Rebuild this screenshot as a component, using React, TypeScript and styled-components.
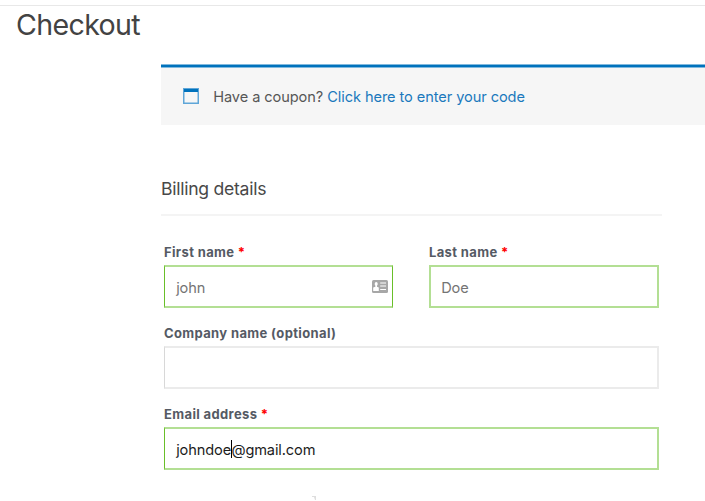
import React from "react";
import styled, { createGlobalStyle } from "styled-components";

const GlobalStyle = createGlobalStyle`
  * { box-sizing: border-box; }
  html, body { margin: 0; background: #fff; overflow: hidden; }
  body { font-family: Inter, "Liberation Sans", sans-serif; color: #565656; }
`;

const Page = styled.main`
  width: 705px;
  height: 501px;
  padding-top: 5px;
  overflow: hidden;
`;

const Title = styled.h1`
  margin: 0;
  height: 59px;
  border-top: 1px solid #e8e8e8;
  padding-left: 16px;
  font-size: 28.6px;
  line-height: 38px;
  font-weight: 400;
  letter-spacing: -0.65px;
  color: #434343;
`;

const Content = styled.section`
  margin-left: 161px;
`;

const Notice = styled.div`
  height: 61px;
  display: flex;
  align-items: center;
  gap: 14.2px;
  padding: 4px 0 0 22px;
  background: linear-gradient(#80b9de 0 1px, #0072bc 1px 3px, #80b9de 3px 4px, #f6f6f6 4px);
  font-size: 14.6px;
  line-height: 20px;
  white-space: pre;
`;

const WindowIcon = styled.svg`
  margin-top: -1px;
`;

const NoticeText = styled.span`
  letter-spacing: -0.08px;
`;

const CouponLink = styled.a`
  color: #1b79bd;
`;

const Heading = styled.h2`
  margin: 51px 0 0;
  width: 501px;
  height: 40px;
  border-bottom: 2px solid #f4f4f4;
  font-size: 17.6px;
  line-height: 25px;
  font-weight: 400;
  letter-spacing: -0.27px;
  color: #484848;
`;

const Form = styled.form`
  display: grid;
  grid-template-columns: 229px 230px;
  column-gap: 36px;
  row-gap: 15px;
  width: 495px;
  margin: 27px 0 0 3px;
`;

const Field = styled.div<{ $wide?: boolean }>`
  grid-column: ${(p) => (p.$wide ? "1 / -1" : "auto")};
  height: 66px;
`;

const Label = styled.label`
  display: block;
  height: 22px;
  font-size: 13px;
  line-height: 19px;
  font-weight: 700;
  letter-spacing: 0.36px;
  color: #555a64;
`;

const Required = styled.span`
  color: #f00;
`;

const Control = styled.div<{ $valid?: boolean; $left?: number; $right?: number; $active?: boolean }>`
  height: 43px;
  display: flex;
  align-items: center;
  padding: 2px 4px 0 ${(p) => 12.2 - (p.$left ?? 1)}px;
  border-style: solid;
  border-width: 2px ${(p) => p.$right ?? 2}px 2px ${(p) => p.$left ?? 1}px;
  border-color: ${(p) => (p.$valid ? "#b3df94" : "#ebebeb")};
  ${(p) => (p.$left ?? 1) === 1 && `border-left-color: ${p.$valid ? "#69bf29" : "#d8d8d8"};`}
  ${(p) => p.$right === 1 && "border-right-color: #69bf29;"}
  font-size: 14.6px;
  line-height: 20px;
  letter-spacing: -0.13px;
  color: ${(p) => (p.$active ? "#1c1c1c" : "#747474")};
`;

const Caret = styled.span`
  width: 1px;
  height: 18px;
  background: #000;
  margin-right: -0.6px;
  margin-top: -1px;
`;

const CardIcon = styled.svg`
  margin-left: auto;
  margin-top: -2px;
`;

const NextLabelEdge = styled.svg`
  display: block;
  margin: 25px 0 0 151px;
`;

const Star = () => <Required> *</Required>;

export default function App() {
  return (
    <>
      <GlobalStyle />
      <Page>
        <Title>Checkout</Title>
        <Content>
          <Notice>
            <WindowIcon width="16" height="16" viewBox="0 0 16 16">
              <path fill="#5fa6d8" fillRule="evenodd" d="M0 0h16v16H0zM1.5 4v10.5h13V4z" />
              <path fill="#0072bc" d="M1 1h14v3H1z" />
            </WindowIcon>
            <NoticeText>
              Have a coupon? <CouponLink>Click here to enter your code</CouponLink>
            </NoticeText>
          </Notice>
          <Heading>Billing details</Heading>
          <Form>
            <Field>
              <Label>First name<Star /></Label>
              <Control $valid $right={1}>
                john
                <CardIcon width="16" height="13" viewBox="0 0 16 13">
                  <rect width="16" height="13" rx="1.5" fill="#a7a7a7" />
                  <path fill="#fff" d="M2.7 3.8a1.5 1.7 0 0 1 3 0c0 1-.3 1.5-.7 1.9v1l1.8.9V11H1.2V7.6l2.2-.9v-1c-.4-.4-.7-.9-.7-1.9zM8.2 2.5H14v1H8.2zM8.2 5.5H14v1H8.2zM8.2 9H14v1H8.2z" />
                </CardIcon>
              </Control>
            </Field>
            <Field>
              <Label>Last name<Star /></Label>
              <Control $valid $left={2}>Doe</Control>
            </Field>
            <Field $wide>
              <Label>Company name (optional)</Label>
              <Control />
            </Field>
            <Field $wide>
              <Label>Email address<Star /></Label>
              <Control $valid $active>
                johndoe<Caret />@gmail.com
              </Control>
            </Field>
          </Form>
          <NextLabelEdge width="5" height="5" viewBox="0 0 5 5">
            <path fill="#dedede" d="M0 0h4v4H3L2 1H0z" />
          </NextLabelEdge>
        </Content>
      </Page>
    </>
  );
}
